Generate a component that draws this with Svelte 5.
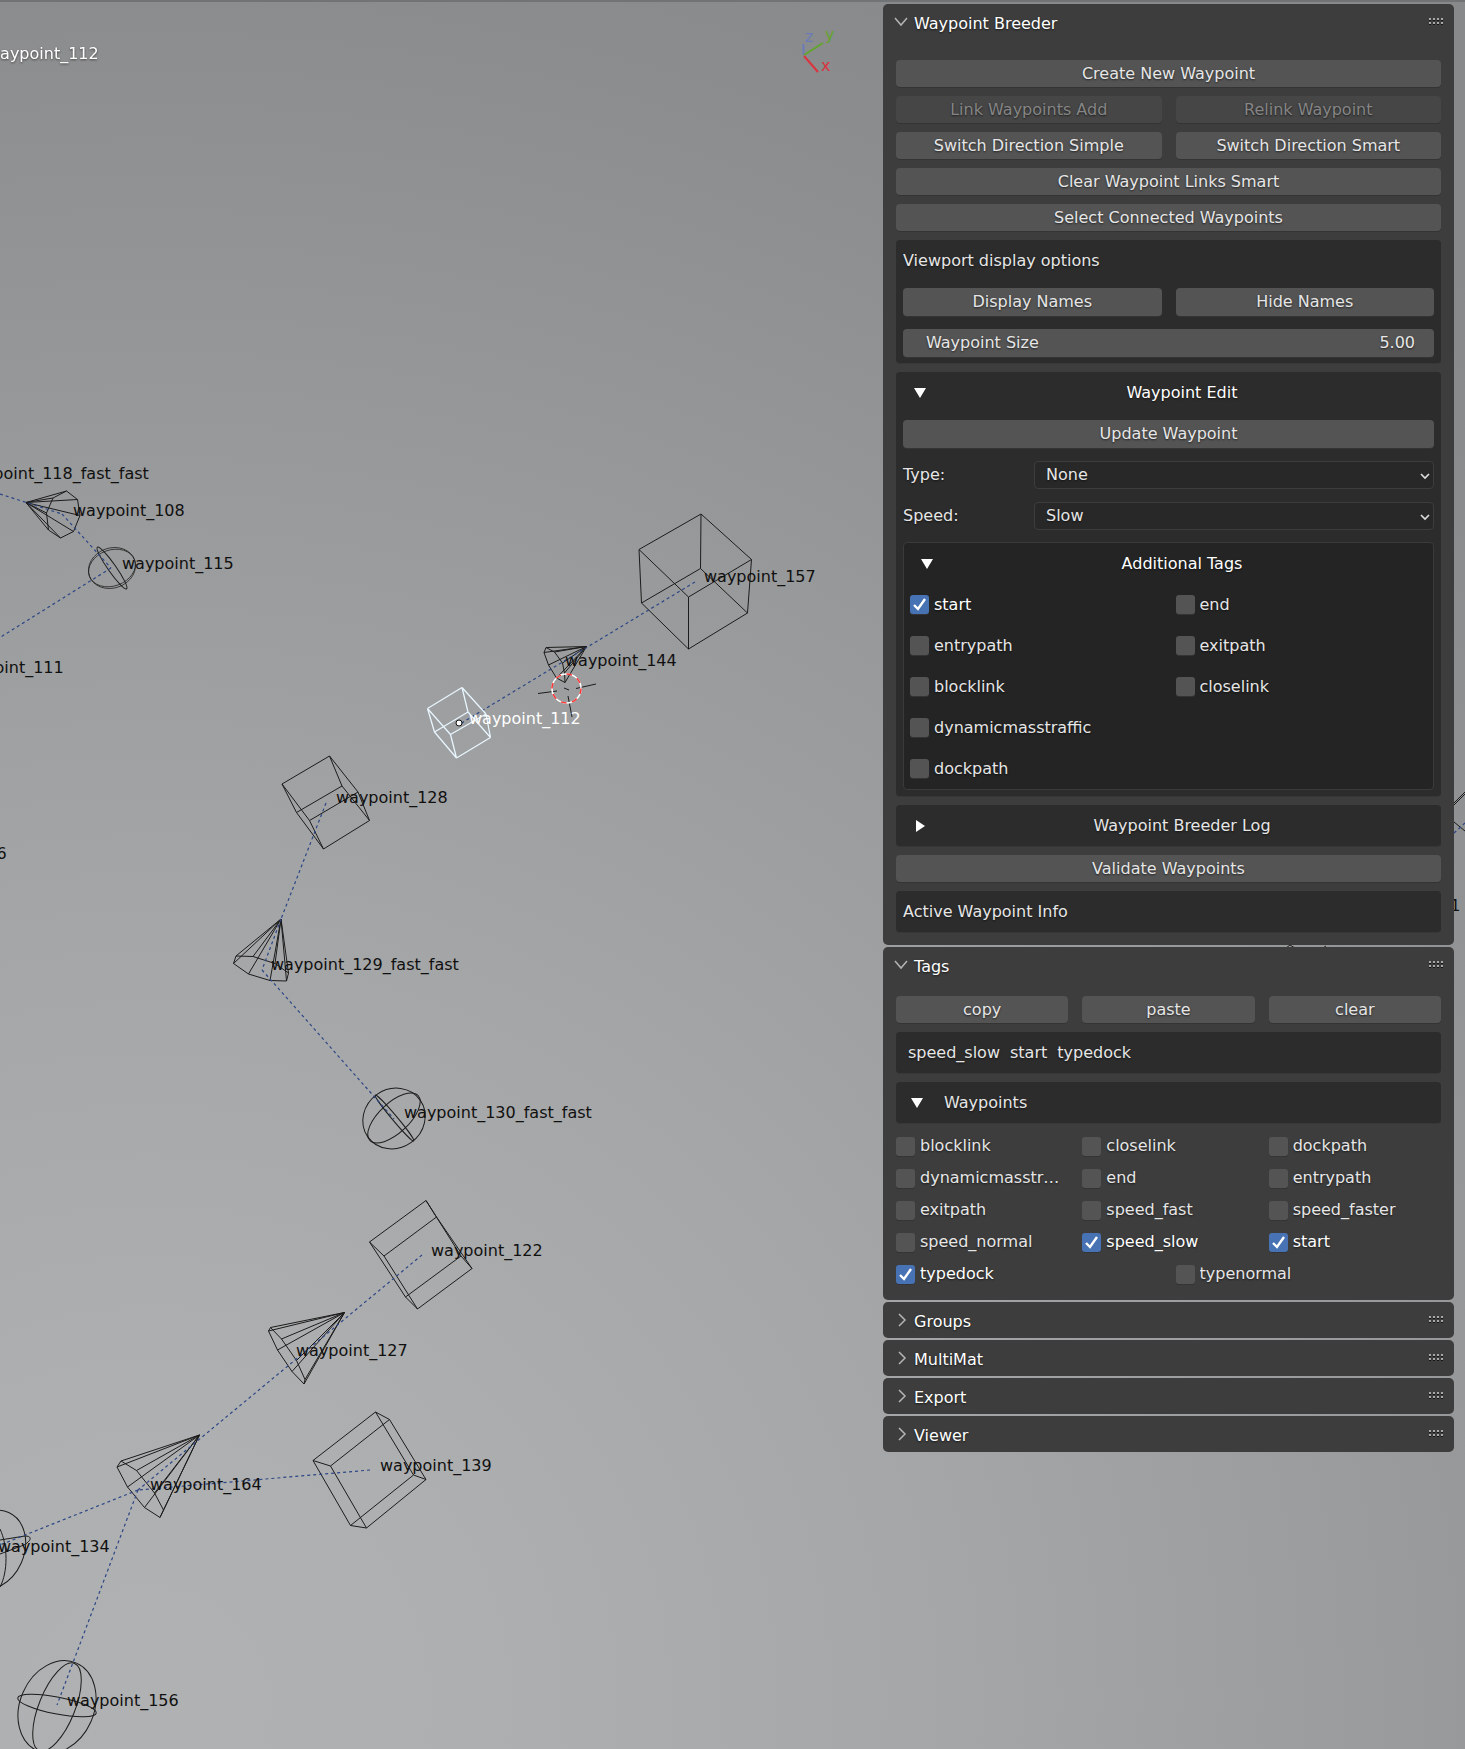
<script>
  const cube = (p) => {
    const e = [[0,1],[1,2],[2,3],[3,0],[4,5],[5,6],[6,7],[7,4],[0,4],[1,5],[2,6],[3,7]];
    return e.map(([a, b]) => `M${p[a]}L${p[b]}`).join('');
  };
  const cone = (apex, ring) =>
    `M${ring.join('L')}Z` + ring.map((r) => `M${apex}L${r}`).join('');

  const shapes = [
    cube([[701,514],[639,549.5],[688.5,597],[751.5,559.5],[700.5,568.5],[641.5,603],[688.5,649],[747.5,613]]),
    cube([[329.5,756],[282,784],[309.5,820.5],[358,792],[342,786],[296.5,812.5],[323.5,849],[369.5,820.5]]),
    cube([[426,1200.5],[369.5,1242],[405.5,1297],[461,1256],[436.5,1217],[384,1256],[417.5,1309],[472,1268.5]]),
    cube([[375.5,1412],[313,1460.5],[350.5,1525.5],[413.5,1475],[389.5,1419.5],[330.5,1466],[366.5,1528],[426,1479.5]]),
    cone([26,502.5], [[66.5,491],[77.5,499.5],[80,515.5],[73.5,531.5],[60.5,538],[48.5,530],[46.5,513],[53,498]]),
    cone([586.5,646.5], [[546,647.5],[544,652.5],[548.5,665],[556.5,678],[565,682.5],[564.5,673],[562.5,663],[554.5,652]]),
    cone([281,919], [[236,956],[233.5,963.5],[248.5,974],[270,980.5],[286.5,981],[288.5,973],[275,963.5],[253,956.5]]),
    cone([344.5,1312.5], [[270.5,1327.5],[268.5,1331],[277.5,1350],[292,1371.5],[304,1384],[305,1379.5],[296.5,1360.5],[281.5,1339]]),
    cone([199.5,1435], [[121,1461],[117,1467],[127.5,1487],[144.5,1507.5],[160,1517.5],[163.5,1510],[154.5,1493],[136.5,1470.5]])
  ];
  const active = cube([[462,687.5],[427.5,708.5],[450.5,734.5],[486,714],[468,712],[434.5,732],[456.5,758],[490.5,737.5]]);

  const links = [
    [0,494,62,514], [62,514,111,568], [111,568,0,637.5], [695,582,460,724],
    [326,803,281,919], [281,919,262,970], [262,970,394,1119], [422,1255,138,1490],
    [370,1470,138,1490], [138,1490,0,1545], [138,1490,57,1705]
  ];

  const labels = [
    ['waypoint_118_fast_fast', -39, 479], ['waypoint_108', 73, 516], ['waypoint_115', 122, 569],
    ['waypoint_111', -48, 673], ['waypoint_157', 704, 582], ['waypoint_144', 565, 666],
    ['waypoint_128', 336, 803], ['waypoint_129_fast_fast', 271, 970], ['waypoint_130_fast_fast', 404, 1118],
    ['waypoint_122', 431, 1256], ['waypoint_127', 296, 1356], ['waypoint_139', 380, 1471],
    ['waypoint_164', 150, 1490], ['waypoint_134', -2, 1552], ['waypoint_156', 67, 1706],
    ['waypoint_146', -105, 859], ['waypoint_1', 1369, 911]
  ];

  const additional = [['start', true], ['end'], ['entrypath'], ['exitpath'], ['blocklink'], ['closelink'], ['dynamicmasstraffic'], ['dockpath']];
  const tags = ['blocklink', 'closelink', 'dockpath', 'dynamicmasstraffic', 'end', 'entrypath', 'exitpath', 'speed_fast', 'speed_faster', 'speed_normal', 'speed_slow', 'start'];
  const active_tags = ['speed_slow', 'start', 'typedock'];
</script>

{#snippet header(title, open)}
  <button class="head" aria-expanded={open}>
    <svg class="chev" width="16" height="16" viewBox="0 0 16 16" aria-hidden="true">
      <path d={open ? 'M1 4l6 7 6-7' : 'M5 2l6 6-6 6'} />
    </svg>
    <span>{title}</span>
    <svg class="grip" width="15" height="8" viewBox="0 0 15 8" aria-hidden="true">
      {#each [0, 4, 8, 12] as x}
        {#each [0, 4] as y}
          <rect {x} {y} width="2" height="2" fill="#a8a8a8" />
          <rect {x} y={y + 2} width="2" height="1" fill="#151515" />
        {/each}
      {/each}
    </svg>
  </button>
{/snippet}

{#snippet tri(open)}
  <svg class="tri" width="14" height="14" viewBox="0 0 14 14" aria-hidden="true">
    <path d={open ? 'M1 2h12L7 12z' : 'M3 1v12l9-6z'} />
  </svg>
{/snippet}

{#snippet check(name, on)}
  <label class="check" class:on>
    <input type="checkbox" checked={on} />
    <span>{name}</span>
  </label>
{/snippet}

<main>
  <svg class="scene" width="100%" height="100%" role="img" aria-label="3D viewport">
    <g class="wire">
      {#each shapes as d}<path {d} />{/each}
      <g transform="rotate(-20 112 568)">
        <ellipse class="thin" cx="112" cy="568" rx="24" ry="20" /><ellipse class="thin" cx="112" cy="568" rx="24" ry="18" />
      </g>
      <ellipse cx="112" cy="568" rx="4" ry="25.5" transform="rotate(-35 112 568)" />
      <ellipse cx="394" cy="1118.5" rx="32" ry="29.5" transform="rotate(-35 394 1118.5)" />
      <ellipse cx="394" cy="1118" rx="33" ry="15" transform="rotate(-43 394 1118)" />
      <ellipse cx="394.5" cy="1118" rx="2.5" ry="30" transform="rotate(-40 394.5 1118)" />
      <ellipse cx="57" cy="1707" rx="37" ry="48" transform="rotate(24 57 1707)" />
      <ellipse cx="57" cy="1707" rx="18" ry="47" transform="rotate(22 57 1707)" />
      <ellipse cx="57" cy="1705.5" rx="40" ry="8.5" transform="rotate(11 57 1705.5)" />
      <ellipse cx="-8" cy="1550" rx="32" ry="41" transform="rotate(24 -8 1550)" />
      <path d="M0 1529C8 1546 8 1572 0 1587M0 1540L25 1536C33 1536 31 1541 24 1545L0 1554" />
      <path d="M1454 803L1465 792M1454 805L1465 794M1454 822L1465 831M1286 948l4-3 5 3M1323 948l3-2" />
    </g>
    <g class="links">
      {#each links as [x1, y1, x2, y2]}<line {x1} {y1} {x2} {y2} />{/each}
      <path d="M1454 833L1465 823" />
    </g>
    <path class="active" d={active} />
    <circle cx="459" cy="723" r="3" fill="#fff" stroke="#111" />
    <g class="wire"><path d="M538 693.5L557 691M576 688.5L596 684M568 696L572 717M564 688l5 2" /></g>
    <circle cx="566.5" cy="688.5" r="14.5" fill="none" stroke="#fff" stroke-width="1.5" />
    <circle cx="566.5" cy="688.5" r="14.5" fill="none" stroke="#f33" stroke-width="1.5" pathLength="16" stroke-dasharray="1 1" />
    <g class="gizmo">
      <path class="z" d="M803.5 55V44" /><path class="y" d="M804 55L823 43" /><path class="x" d="M804 56L818 72" />
      <text class="z" x="805" y="42">z</text><text class="y" x="825" y="40">y</text><text class="x" x="821" y="71">x</text>
    </g>
    {#each labels as [t, x, y]}<text {x} {y}>{t}</text>{/each}
    <text class="white" x="469" y="724">waypoint_112</text>
    <text class="white name" x="-13" y="59">waypoint_112</text>
  </svg>

  <aside>
    <section class="panel">
      {@render header('Waypoint Breeder', true)}
      <div class="body">
        <button class="btn">Create New Waypoint</button>
        <div class="two">
          <button class="btn" disabled>Link Waypoints Add</button>
          <button class="btn" disabled>Relink Waypoint</button>
        </div>
        <div class="two">
          <button class="btn">Switch Direction Simple</button>
          <button class="btn">Switch Direction Smart</button>
        </div>
        <button class="btn">Clear Waypoint Links Smart</button>
        <button class="btn">Select Connected Waypoints</button>
        <div class="box">
          <div class="row">Viewport display options</div>
          <div class="row two">
            <button class="btn">Display Names</button>
            <button class="btn">Hide Names</button>
          </div>
          <div class="row">
            <label class="btn num">Waypoint Size<input type="text" value="5.00" /></label>
          </div>
        </div>
        <div class="box">
          <button class="row fold">{@render tri(true)}<span>Waypoint Edit</span></button>
          <div class="row"><button class="btn">Update Waypoint</button></div>
          {#each [['Type:', 'None'], ['Speed:', 'Slow']] as [name, value]}
            <label class="row field">
              <span>{name}</span>
              <span class="pick">
                <select><option>{value}</option></select>
                <svg width="10" height="8" viewBox="0 0 10 8" aria-hidden="true"><path d="M1 2l4 4 4-4" /></svg>
              </span>
            </label>
          {/each}
          <div class="inner">
            <button class="row fold">{@render tri(true)}<span>Additional Tags</span></button>
            <div class="grid">
              {#each additional as [name, on]}
                <div class="row" class:wide={name.startsWith('d')}>{@render check(name, !!on)}</div>
              {/each}
            </div>
          </div>
        </div>
        <div class="box"><button class="row fold dim">{@render tri(false)}<span>Waypoint Breeder Log</span></button></div>
        <button class="btn">Validate Waypoints</button>
        <div class="box"><div class="row">Active Waypoint Info</div></div>
      </div>
    </section>

    <section class="panel">
      {@render header('Tags', true)}
      <div class="body tight">
        <div class="three">
          <button class="btn">copy</button>
          <button class="btn">paste</button>
          <button class="btn">clear</button>
        </div>
        <div class="box"><div class="row current">{#each active_tags as t}<span>{t}</span>{/each}</div></div>
        <div class="box"><button class="row fold left">{@render tri(true)}<span>Waypoints</span></button></div>
        <div class="tags">
          <div class="three">
            {#each tags as t}{@render check(t, active_tags.includes(t))}{/each}
          </div>
          <div class="two">
            {@render check('typedock', true)}
            {@render check('typenormal', false)}
          </div>
        </div>
      </div>
    </section>

    {#each ['Groups', 'MultiMat', 'Export', 'Viewer'] as t}
      <section class="panel">{@render header(t, false)}</section>
    {/each}
  </aside>
</main>

<style>
  :global(body) { margin: 0; }
  main {
    position: relative;
    box-sizing: border-box;
    min-height: 100vh;
    display: grid;
    grid-template-columns: 883fr 571fr;
    padding: 4px 11px 0 0;
    overflow: hidden;
    font: 16px/20px "DejaVu Sans", sans-serif;
    color: #e6e6e6;
    background: radial-gradient(ellipse 2000px 1900px at 150px 1700px, #b0b1b2 0%, #aeafb0 16%, #a5a6a7 40%, #999a9b 64%, #8b8c8d 90%, #88898a 100%);
    box-shadow: inset 0 2px 0 #717375;
  }
  .scene { position: absolute; left: 0; top: 0; }
  .scene text { fill: #101010; }
  .scene .white { fill: #fff; }
  .name { filter: drop-shadow(0 1px 1px #444); }
  .wire, .active, .links, .gizmo path { fill: none; }
  .wire { stroke: #1c1c1c; stroke-width: 1; }
  .thin { stroke-width: 0.7; }
  .active { stroke: #e8f6ff; stroke-width: 1.3; }
  .links { stroke: #2c4686; stroke-width: 1.2; stroke-dasharray: 3 3; }
  .gizmo path { stroke-width: 2; }
  .gizmo path.x { stroke: #d9343f; }
  .gizmo path.y { stroke: #62a52c; }
  .gizmo path.z { stroke: #6b7bb8; }
  .gizmo text.x { fill: #d9343f; }
  .gizmo text.y { fill: #62a52c; }
  .gizmo text.z { fill: #6b7bb8; }

  aside {
    position: relative;
    grid-column: 2;
    align-self: start;
    display: grid;
    gap: 2px;
  }
  button, input, select {
    font: inherit;
    color: inherit;
    margin: 0;
    padding: 0;
    border: 0;
    background: none;
  }
  .panel {
    background: #3d3d3d;
    border-radius: 5px;
    text-shadow: 0 1px 2px rgba(0, 0, 0, 0.6);
  }
  .head {
    width: 100%;
    height: 36px;
    display: flex;
    align-items: center;
    gap: 4px;
    padding: 0 10px 0 11px;
    color: #fff;
    text-align: left;
    text-shadow: inherit;
  }
  .head span { flex: 1; padding-top: 3px; }
  .chev { fill: none; stroke: #b4b4b4; stroke-width: 1.5; }
  .body { display: grid; gap: 9px; padding: 20px 13px 13px; }
  .tight { padding-top: 13px; }
  .two { display: grid; grid-template-columns: 1fr 1fr; column-gap: 14px; }
  .three { display: grid; grid-template-columns: repeat(3, 1fr); column-gap: 14px; }
  .btn {
    box-sizing: border-box;
    width: 100%;
    height: 27px;
    border-radius: 4px;
    background: #545454;
    box-shadow: 0 1px 0 #343434;
    text-align: center;
    text-shadow: inherit;
  }
  .btn:disabled { background: #464646; color: #858585; }
  .box { background: #2c2c2c; border-radius: 4px; box-shadow: 0 1px 0 #373737; padding: 0 7px; }
  .row { height: 41px; display: grid; align-items: center; box-sizing: border-box; }
  .row .btn { height: 28px; }
  .row.two { grid-template-columns: 1fr 1fr; }
  .num { display: flex; align-items: center; padding: 0 19px 0 23px; }
  .num input { flex: 1; min-width: 0; text-align: right; text-shadow: inherit; }
  .fold {
    width: 100%;
    grid-template-columns: 34px 1fr;
    padding: 0 17px 0 10px;
    color: #fff;
    text-shadow: inherit;
  }
  .fold.dim { color: #e6e6e6; }
  .fold.left { padding-left: 7px; text-align: left; color: #e6e6e6; }
  .tri { fill: #fff; }
  .field { grid-template-columns: 131px 1fr; }
  .pick { position: relative; display: grid; }
  select {
    appearance: none;
    box-sizing: border-box;
    width: 100%;
    height: 28px;
    padding-left: 11px;
    border: 1px solid #3d3d3d;
    border-radius: 4px;
    background: #282828;
    text-shadow: inherit;
  }
  .pick svg { position: absolute; right: 4px; top: 11px; fill: none; stroke: #e0e0e0; stroke-width: 1.6; }
  .inner {
    margin: 6px 0;
    padding: 0 6px;
    border: 1px solid #3a3a3a;
    border-radius: 4px;
    background: #242424;
  }
  .grid { display: grid; grid-template-columns: 1fr 1fr; column-gap: 14px; }
  .wide { grid-column: 1 / -1; }
  .check { display: flex; align-items: center; gap: 5px; min-width: 0; }
  .check span { overflow: hidden; text-overflow: ellipsis; white-space: nowrap; padding-right: 8px; }
  .check.on { color: #fff; }
  .check input {
    appearance: none;
    flex: none;
    width: 19px;
    height: 19px;
    border-radius: 3px;
    background: #545454;
    box-shadow: 0 1px 0 #343434;
  }
  .check input:checked {
    background: #4772b3 url("data:image/svg+xml,%3Csvg xmlns='http://www.w3.org/2000/svg' viewBox='0 0 19 19'%3E%3Cpath d='M4 10l4 4 7-10' fill='none' stroke='white' stroke-width='2.4'/%3E%3C/svg%3E");
  }
  .current { display: flex; gap: 10px; padding-left: 5px; }
  .tags { display: grid; row-gap: 12px; padding: 4px 0 3px; }
  .tags .three { row-gap: 12px; }
  .tags .check { height: 20px; }
</style>
